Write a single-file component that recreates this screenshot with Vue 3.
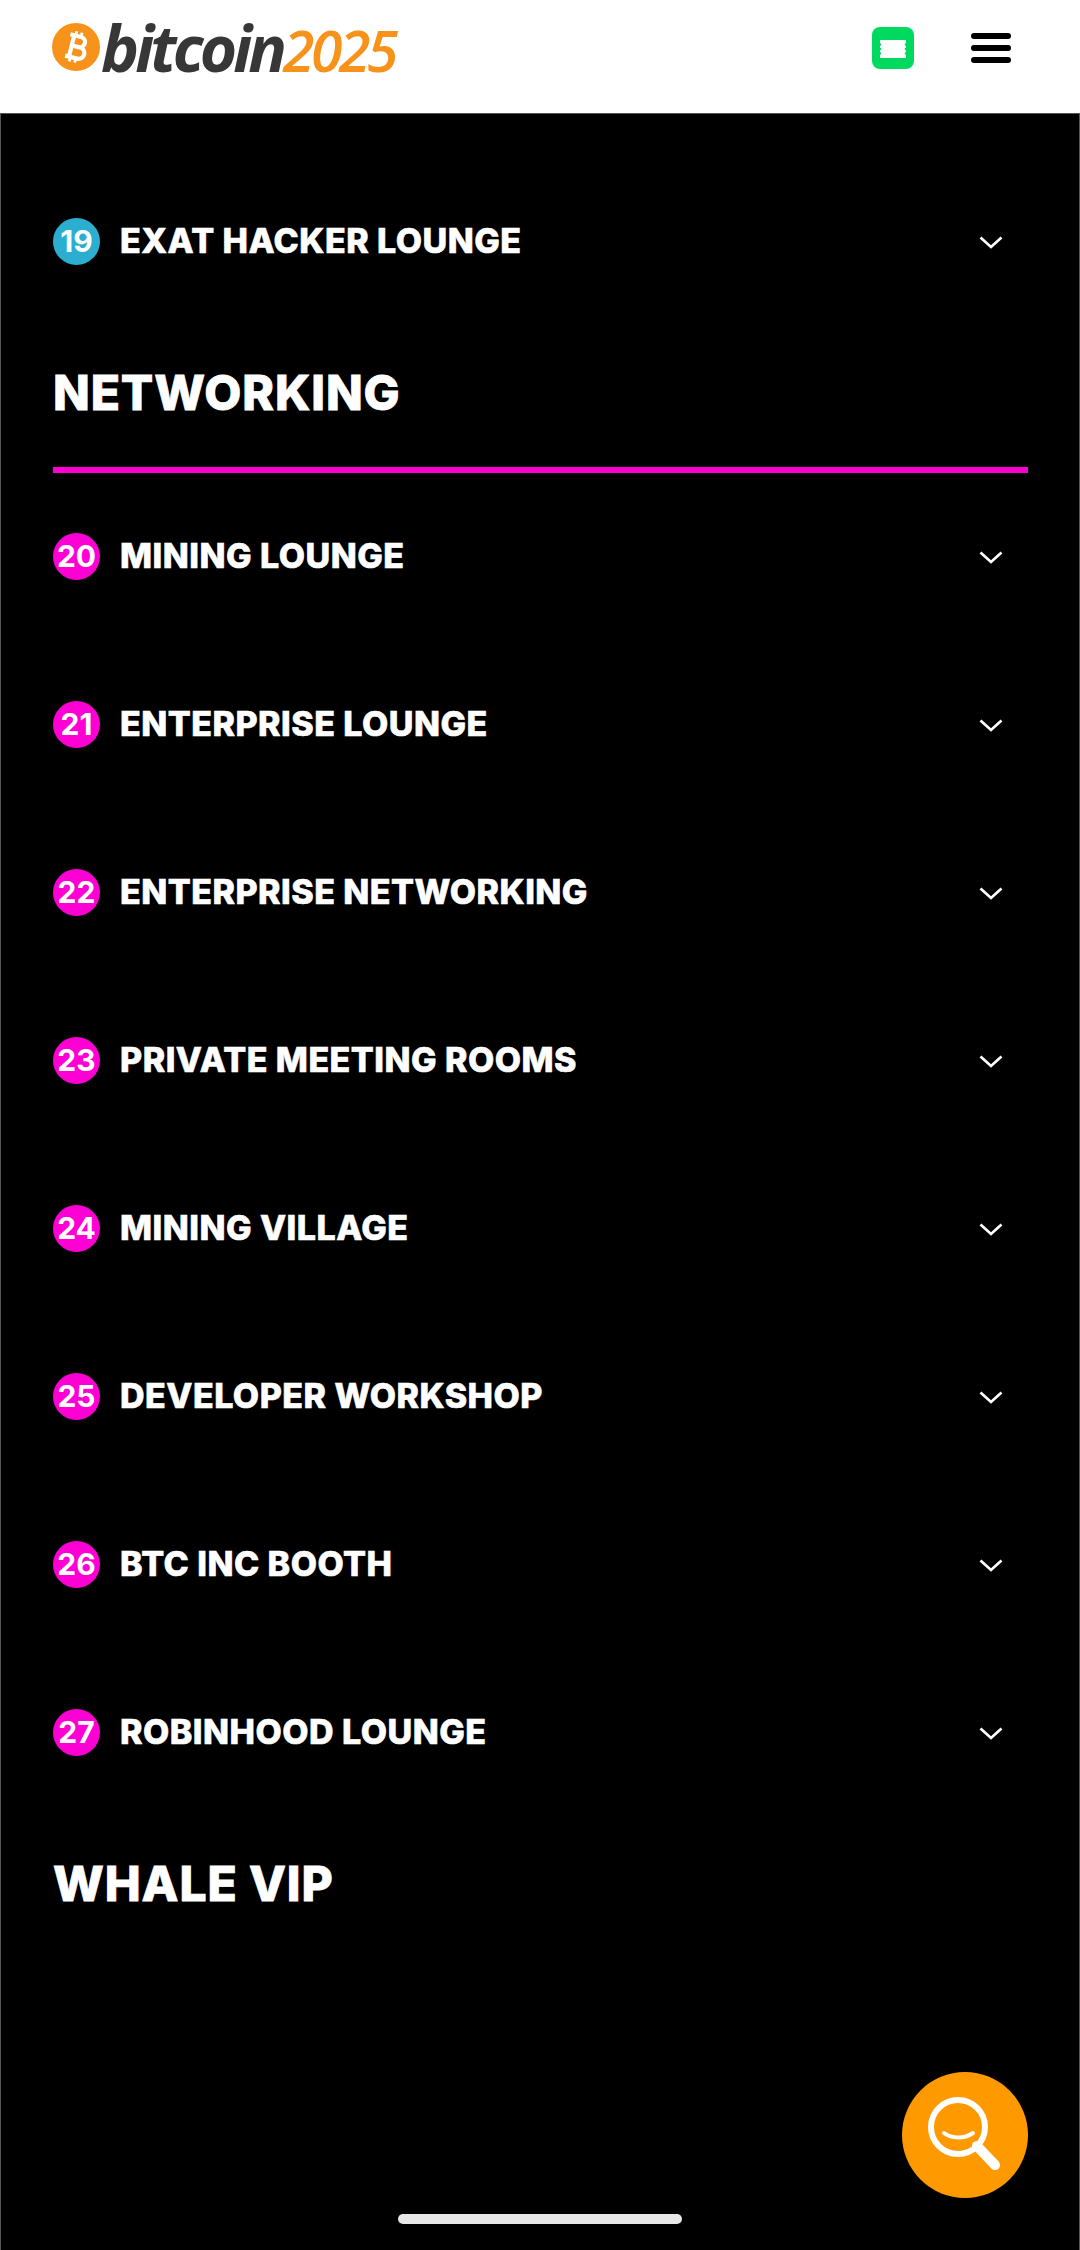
<template>
  <div class="page">
    <header class="topbar">
      <div class="logo">
        <svg class="coin" viewBox="0 0 48 48" aria-hidden="true">
          <circle cx="24" cy="24" r="24" fill="#f7931a" />
          <g transform="rotate(14 24 24)" fill="none" stroke="#fff" stroke-width="4.2">
            <path d="M15.5 13h11a5 5 0 0 1 0 10.5H18M18 23.5h10a5.7 5.7 0 0 1 0 11.5H15.5" />
            <path d="M19.5 13v22" />
            <path d="M21 8.5v4M26.5 8.5v4M21 35.5v4M26.5 35.5v4" stroke-width="2.8" />
          </g>
        </svg>
        <span class="wordmark">bitcoin<em>2025</em></span>
      </div>
      <div class="actions">
        <svg class="ticket" viewBox="0 0 42 42" aria-hidden="true">
          <rect width="42" height="42" rx="8" fill="#00d95f" />
          <path d="M8 13H34V16.2a1.3 1.3 0 0 0 0 2.6V20.7a1.3 1.3 0 0 0 0 2.6V25.2a1.3 1.3 0 0 0 0 2.6V31H8V27.8a1.3 1.3 0 0 0 0-2.6V23.3a1.3 1.3 0 0 0 0-2.6V18.8a1.3 1.3 0 0 0 0-2.6Z" fill="#fff" />
        </svg>
        <div class="burger"><i></i><i></i><i></i></div>
      </div>
    </header>

    <main class="list">
      <template v-for="group in groups" :key="group.title">
        <h2 v-if="group.title" class="group-title">{{ group.title }}</h2>
        <div v-if="group.items.length && group.title" class="rule"></div>
        <div v-for="item in group.items" :key="item.num" class="row">
          <span class="badge" :class="group.tone">{{ item.num }}</span>
          <span class="name">{{ item.name }}</span>
          <svg class="chevron" viewBox="0 0 24 13" aria-hidden="true">
            <path d="M1.5 1.5 12 11 22.5 1.5" fill="none" stroke="#fff" stroke-width="2.6" />
          </svg>
        </div>
      </template>
    </main>

    <button class="search" aria-label="Search">
      <svg viewBox="0 0 126 126" width="126" height="126">
        <circle cx="56" cy="55" r="27" fill="none" stroke="#fff" stroke-width="6" />
        <path d="M42 61c8 6 20 6 29 0" fill="none" stroke="#fff" stroke-width="4" stroke-linecap="round" />
        <path d="M75 74 93 93" fill="none" stroke="#fff" stroke-width="10" stroke-linecap="round" />
      </svg>
    </button>
    <div class="home-bar"></div>
  </div>
</template>

<script setup>
const groups = [
  {
    title: '',
    tone: 'teal',
    items: [{ num: 19, name: 'EXAT HACKER LOUNGE' }],
  },
  {
    title: 'NETWORKING',
    tone: 'pink',
    items: [
      { num: 20, name: 'MINING LOUNGE' },
      { num: 21, name: 'ENTERPRISE LOUNGE' },
      { num: 22, name: 'ENTERPRISE NETWORKING' },
      { num: 23, name: 'PRIVATE MEETING ROOMS' },
      { num: 24, name: 'MINING VILLAGE' },
      { num: 25, name: 'DEVELOPER WORKSHOP' },
      { num: 26, name: 'BTC INC BOOTH' },
      { num: 27, name: 'ROBINHOOD LOUNGE' },
    ],
  },
  { title: 'WHALE VIP', tone: 'pink', items: [] },
]
</script>

<style>
html, body { margin: 0; background: #000; }
</style>

<style scoped>
.page {
  position: relative;
  width: 1080px;
  height: 2250px;
  overflow: hidden;
  background: #000;
  font-family: Inter, "Liberation Sans", sans-serif;
  color: #fff;
}

.topbar {
  display: flex;
  align-items: center;
  justify-content: space-between;
  height: 113px;
  padding: 0 69px 0 52px;
  box-sizing: border-box;
  background: #fff;
}
.logo { display: flex; align-items: center; margin-top: -19px; }
.coin { width: 48px; height: 48px; flex: none; }
.wordmark {
  margin-left: 1px;
  margin-top: 3px;
  font-family: "Open Sans", sans-serif;
  font-size: 64px;
  line-height: 62px;
  font-weight: 700;
  font-style: italic;
  letter-spacing: -3.9px;
  color: #373737;
}
.wordmark em { font-size: 57px; font-weight: 600; color: #f7931a; letter-spacing: -3.4px; }
.actions { display: flex; align-items: center; gap: 57px; margin-top: -17px; }
.ticket { width: 42px; height: 42px; display: block; }
.burger { display: flex; flex-direction: column; gap: 6px; width: 40px; }
.burger i { display: block; height: 6px; border-radius: 3px; background: #000; }

.list {
  box-sizing: border-box;
  height: 2137px;
  padding: 43px 51px 0 52px;
  border: 1px solid #555;
  border-bottom: 0;
}
.group-title {
  margin: 0;
  height: 142px;
  padding-top: 38px;
  box-sizing: border-box;
  font-size: 48px;
  line-height: 60px;
  font-weight: 800;
  letter-spacing: 0.9px;
  -webkit-text-stroke: 0.8px #fff;
}
.rule { height: 6px; margin-bottom: -1px; background: #ff00d4; }

.row { display: flex; align-items: center; height: 168px; }
.badge {
  display: flex;
  align-items: center;
  justify-content: center;
  flex: none;
  width: 47px;
  height: 47px;
  border-radius: 50%;
  font-size: 30px;
  font-weight: 700;
}
.teal { background: #2baecf; }
.pink { background: #ff00d4; }
.name {
  margin-left: 20px;
  margin-top: -2px;
  font-size: 34px;
  font-weight: 800;
  letter-spacing: 0.48px;
  -webkit-text-stroke: 0.6px #fff;
  white-space: nowrap;
}
.chevron { width: 24px; height: 13px; margin: 2px 25px 0 auto; }

.search {
  position: absolute;
  left: 902px;
  top: 2072px;
  width: 126px;
  height: 126px;
  padding: 0;
  border: 0;
  border-radius: 50%;
  background: #ff9900;
}
.search svg { display: block; }
.home-bar {
  position: absolute;
  left: 398px;
  top: 2214px;
  width: 284px;
  height: 10px;
  border-radius: 5px;
  background: #e8e8e8;
}
</style>
